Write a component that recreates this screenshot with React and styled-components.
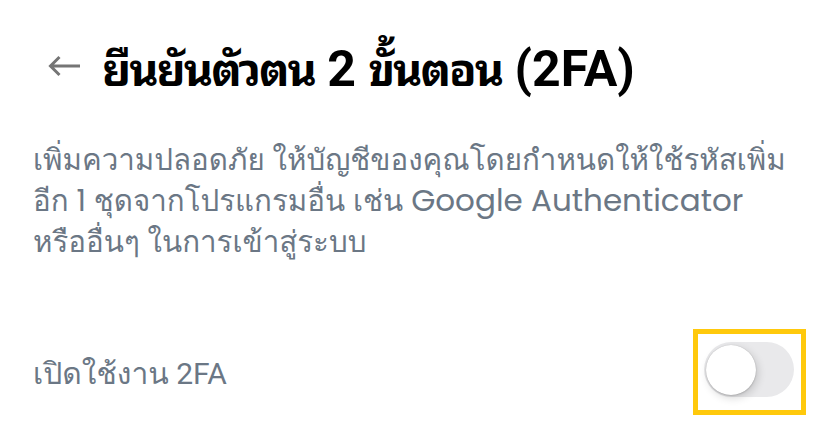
import { useState } from 'react'
import styled, { createGlobalStyle } from 'styled-components'

const GlobalStyle = createGlobalStyle`
  html, body {
    margin: 0;
    padding: 0;
    background: #ffffff;
  }
  body {
    font-family: Roboto, Loma, sans-serif;
  }
`

const Page = styled.div`
  width: 826px;
  height: 437px;
  box-sizing: border-box;
  padding: 0 20px 0 33px;
  display: flex;
  flex-direction: column;
  background: #fff;
`

const Header = styled.div`
  display: flex;
  align-items: center;
  gap: 21px;
  height: 131px;
  padding-left: 14px;
  box-sizing: border-box;
`

const BackButton = styled.button`
  border: none;
  background: none;
  padding: 0;
  display: flex;
  align-items: center;
  cursor: pointer;
`

const Title = styled.h1`
  margin: 0;
  font-family: Roboto, "Noto Sans Thai Looped", sans-serif;
  font-size: 50px;
  font-weight: 700;
  color: #000;
  white-space: nowrap;
`

// the Thai glyphs in the title are set narrower than the Latin ones
const ThaiWord = styled.span`
  font-size: 45px;
  letter-spacing: -2px;
`

const Description = styled.p`
  margin: 8px 0 0;
  font-family: Poppins, Loma, sans-serif;
  font-size: 29.5px;
  line-height: 41px;
  color: #6b7785;
`

const Latin = styled.span`
  font-size: 31px;
`

const Row = styled.div`
  margin-top: 67px;
  display: flex;
  align-items: center;
  justify-content: space-between;
`

const Label = styled.span`
  font-family: Roboto, Loma, sans-serif;
  font-size: 30px;
  color: #6b7785;
  padding-top: 2px;
`

const Highlight = styled.div`
  border: 5px solid #ffc90c;
  padding: 8px 7px 13px 6px;
  display: flex;
`

const Track = styled.button`
  width: 90px;
  height: 55px;
  border-radius: 28px;
  border: none;
  padding: 2px;
  background: ${({ $on }) => ($on ? '#34c759' : '#e9e9eb')};
  display: flex;
  align-items: center;
  justify-content: ${({ $on }) => ($on ? 'flex-end' : 'flex-start')};
  cursor: pointer;
`

const Thumb = styled.span`
  width: 50px;
  height: 50px;
  border-radius: 50%;
  background: #fff;
  box-shadow: 2px 3px 8px rgba(0, 0, 0, 0.16), 0 1px 2px rgba(0, 0, 0, 0.14),
    0 0 1px rgba(0, 0, 0, 0.2);
`

const App = () => {
  const [enabled, setEnabled] = useState(false)

  return (
    <>
      <GlobalStyle />
      <Page>
        <Header>
          <BackButton>
            <svg width="34" height="22" viewBox="0 0 34 22">
              <path
                d="M33 11H3.5M12.5 2L3.5 11l9 9"
                fill="none"
                stroke="#757575"
                strokeWidth="3"
              />
            </svg>
          </BackButton>
          <Title>
            <ThaiWord>ยืนยันตัวตน</ThaiWord> 2 <ThaiWord>ขั้นตอน</ThaiWord> (2FA)
          </Title>
        </Header>

        <Description>
          เพิ่มความปลอดภัย ให้บัญชีของคุณโดยกำหนดให้ใช้รหัสเพิ่ม
          <br />
          อีก 1 ชุดจากโปรแกรมอื่น เช่น <Latin>Google Authenticator</Latin>
          <br />
          หรืออื่นๆ ในการเข้าสู่ระบบ
        </Description>

        <Row>
          <Label>เปิดใช้งาน 2FA</Label>
          <Highlight>
            <Track $on={enabled} onClick={() => setEnabled(!enabled)}>
              <Thumb />
            </Track>
          </Highlight>
        </Row>
      </Page>
    </>
  )
}

export default App
